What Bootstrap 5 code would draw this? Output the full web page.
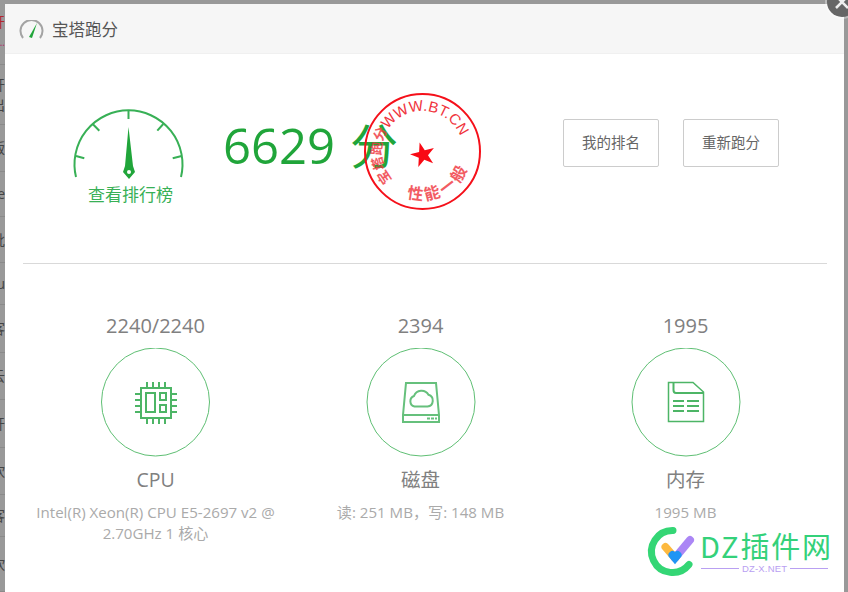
<!DOCTYPE html>
<html lang="zh">
<head>
<meta charset="utf-8">
<title>宝塔跑分</title>
<link href="https://cdn.jsdelivr.net/npm/bootstrap@5.3.0/dist/css/bootstrap.min.css" rel="stylesheet">
<style>
html,body{height:592px;overflow:hidden}
body{background:#999;font-family:"Open Sans","Noto Sans CJK SC",sans-serif;color:#666}
.strip{width:5px;overflow:hidden;flex:none;font-size:14px;color:#444;height:592px}
.strip-row{border-bottom:1px solid #8a8a8a;white-space:nowrap;display:flex;flex-direction:column;align-items:flex-end;justify-content:center;line-height:20px}
.strip-red{color:#b3262e}
.strip-pink{color:#b52a6a;font-size:10px}
.dlg{width:839px;flex:none;height:588px;margin-top:4px;background:#fff;position:relative}
.dlg-head{height:50px;background:#f6f6f6;border-bottom:1px solid #f0f0f0;padding:3px 0 0 14px;font-size:16.500px;color:#555}
.top-zone{height:210px;margin:0 17px 0 18px;border-bottom:1px solid #d9d9d9;padding:54px 48px 0 46px}
.gauge-box{width:120px;color:#38b056;font-size:17px;line-height:20px;white-space:nowrap}
.gauge-box svg{display:block}
.gauge-label{margin-top:5px;margin-left:-3px;margin-right:-6px}
.score{font-size:49px;line-height:60px;color:#20a53a;margin-left:34px;margin-top:7px}
.score i{font-style:normal;margin-left:15px;font-size:48px}
.act{width:96px;height:48px;border:1px solid #ccc;border-radius:2px;background:#fff;color:#666;font-size:14.500px;padding:0}
.act:hover{background:#fff;color:#666;border-color:#ccc}
.acts{margin-left:auto;gap:24px;margin-top:11px}
.cols{margin:0 18px;padding-top:50px;width:795px}
.stat{width:265px;text-align:center;flex:none}
.stat-val{font-size:20px;line-height:24px;color:#808080}
.stat-ico{display:block;margin:10px auto 0;width:110px;height:110px}
.stat-name{font-size:19.500px;line-height:24px;color:#808080;margin-top:10px}
.stat-txt{font-size:15.100px;line-height:21px;color:#aaa;margin:10px auto 0;width:250px}
.closer{position:absolute;top:-17px;right:-13px;width:30px;height:30px;border-radius:50%;background:#666;box-shadow:0 0 0 2px rgba(255,255,255,.35)}
.stamp{position:absolute;left:357px;top:88px;width:120px;height:120px;pointer-events:none}
.wm{position:absolute;left:637px;top:516px;width:190px;height:64px}
</style>
</head>
<body class="d-flex">
<div class="strip">
  <div class="strip-row strip-red" style="height:65px"><span>开</span><span class="strip-pink">...</span></div>
  <div class="strip-row" style="height:60px"><span>开</span><span>出</span></div>
  <div class="strip-row" style="height:47px">版</div>
  <div class="strip-row" style="height:45px">e</div>
  <div class="strip-row" style="height:46px">批</div>
  <div class="strip-row" style="height:42px">u</div>
  <div class="strip-row" style="height:48px">客</div>
  <div class="strip-row" style="height:47px">云</div>
  <div class="strip-row" style="height:48px">开</div>
  <div class="strip-row" style="height:47px">砍</div>
  <div class="strip-row" style="height:42px">客</div>
  <div class="strip-row" style="height:55px">砍</div>
</div>
<div class="dlg">
  <div class="dlg-head d-flex align-items-center gap-2">
    <svg width="25" height="20" viewBox="0 0 25 20"><path d="M4 18A11 11 0 1 1 21 18" fill="none" stroke="#a3a3a3" stroke-width="2"/><path d="M10 17L18 3L13 18Z" fill="#20a53a"/></svg>
    <span>宝塔跑分</span>
  </div>
  <div class="top-zone d-flex align-items-start">
    <div class="gauge-box text-center">
      <svg width="120" height="72" viewBox="69 108 120 72">
        <path d="M76 177A54 54 0 1 1 181 177" fill="none" stroke="#38b056" stroke-width="2"/>
        <path d="M128.500 111V119M92.700 124L99.300 130.700M163.300 124L157.300 130.700M76 156L84.300 158.300M181.700 156L172.700 158.300" stroke="#38b056" stroke-width="2" fill="none"/>
        <path d="M128.500 127L133 166L135 172L129 179L123 172L125 166Z" fill="#20a53a"/>
        <circle cx="129" cy="172" r="2" fill="#fff"/>
      </svg>
      <div class="gauge-label">查看排行榜</div>
    </div>
    <div class="score">6629<i>分</i></div>
    <div class="acts d-flex">
      <button type="button" class="btn act">我的排名</button>
      <button type="button" class="btn act">重新跑分</button>
    </div>
  </div>
  <div class="cols d-flex">
    <div class="stat">
      <div class="stat-val">2240/2240</div>
      <svg class="stat-ico" viewBox="101 348 110 110" fill="none">
        <circle cx="155.500" cy="402" r="54" stroke="#5fbf74" stroke-width="1"/>
        <g stroke="#4db566" stroke-width="2"><rect x="141" y="388" width="30" height="30"/><rect x="146" y="393" width="9" height="19"/><rect x="160" y="393" width="6" height="7"/><rect x="160" y="405" width="6" height="7"/>
        <path d="M147 382V387M153 382V387M159 382V387M165 382V387M147 419V424M153 419V424M159 419V424M165 419V424M135 394H140M135 400H140M135 406H140M135 412H140M172 394H177M172 400H177M172 406H177M172 412H177"/></g>
      </svg>
      <div class="stat-name">CPU</div>
      <div class="stat-txt">Intel(R) Xeon(R) CPU E5-2697 v2 @ 2.70GHz 1 核心</div>
    </div>
    <div class="stat">
      <div class="stat-val">2394</div>
      <svg class="stat-ico" viewBox="366 348 110 110" fill="none">
        <circle cx="421" cy="402" r="54" stroke="#5fbf74" stroke-width="1"/>
        <g stroke="#66c07c" stroke-width="2"><path d="M406 383H436L439 415V422H403V415ZM403 415H439"/>
        <path d="M414.500 406.500H427.500A6 6 0 0 0 428.500 394.800A8 8 0 0 0 414 396A5.500 5.500 0 0 0 414.500 406.500Z"/></g>
        <path d="M427 418.500H430M431 418.500H434M435 418.500H437" stroke="#66c07c" stroke-width="2"/>
      </svg>
      <div class="stat-name">磁盘</div>
      <div class="stat-txt">读: 251 MB，写: 148 MB</div>
    </div>
    <div class="stat">
      <div class="stat-val">1995</div>
      <svg class="stat-ico" viewBox="631 348 110 110" fill="none">
        <circle cx="686" cy="402" r="54" stroke="#5fbf74" stroke-width="1"/>
        <g stroke="#4db566"><path d="M668.500 382.500H693L703.500 392V421.500H668.500Z" stroke-width="1.500"/><path d="M673.500 382V390Q673.500 393 676 393H704" stroke-width="2"/>
        <path d="M673 401H684M687 401H699M673 406H684M687 406H699M673 411H684M687 411H699" stroke-width="2"/></g>
      </svg>
      <div class="stat-name">内存</div>
      <div class="stat-txt">1995 MB</div>
    </div>
  </div>
  <svg class="stamp" viewBox="0 0 120 120" fill="none" overflow="visible">
    <defs><path id="ringTop" d="M29.100 86.350A41 41 0 1 1 99 46"/><path id="ringBot" d="M44.900 105.400A48 48 0 0 0 106.200 74.800"/></defs>
    <circle cx="60.500" cy="59.500" r="57.500" stroke="#f5101a" stroke-width="2"/>
    <path d="M57.600 50.400L62.800 58.300L71.900 55.900L66 63.300L71.100 71.200L62.300 67.800L56.300 75.100L56.800 65.700L48 62.300L57.100 59.900Z" fill="#f90a14"/>
    <text font-size="13.500" font-weight="700" fill="#f0343c" opacity=".8" font-family="'Noto Sans CJK SC',sans-serif"><textPath href="#ringTop" startOffset="-2">宝塔跑分</textPath></text>
    <text font-size="15" fill="#f0343c" font-family="'Liberation Sans',sans-serif"><textPath href="#ringTop" startOffset="52">WWW.BT.CN</textPath></text>
    <text font-size="16" font-weight="700" fill="#f0343c" opacity=".8" font-family="'Noto Sans CJK SC',sans-serif" letter-spacing="3"><textPath href="#ringBot" startOffset="0">性能一般</textPath></text>
  </svg>
  <div class="closer">
    <svg width="30" height="30" viewBox="0 0 30 30"><path d="M9 9L21 21M21 9L9 21" stroke="#eee" stroke-width="2.500"/></svg>
  </div>
  <svg class="wm" viewBox="642 520 190 64" fill="none">
    <path d="M673 530.500A21 21 0 1 0 689 564.500" stroke="#34d675" stroke-width="7" stroke-linecap="round"/>
    <path d="M665.500 547L675 558" stroke="#fdb93f" stroke-width="8" stroke-linecap="round"/>
    <path d="M675 558L690 540" stroke="#ab86f5" stroke-width="8" stroke-linecap="round"/>
    <path d="M672.500 555L675 558L677.500 555" stroke="#1f95f5" stroke-width="8" stroke-linecap="round"/>
    <text x="700" y="558" font-size="29" fill="#34d17a" font-family="'Noto Sans CJK SC',sans-serif" textLength="131">DZ插件网</text>
    <path d="M701 568.500H739M790 568.500H828" stroke="#b9a0f2"/>
    <text x="742" y="572" font-size="9.500" fill="#b9a0f2" font-family="'Liberation Sans',sans-serif" textLength="45">DZ-X.NET</text>
  </svg>
</div>
<script src="https://cdn.jsdelivr.net/npm/bootstrap@5.3.0/dist/js/bootstrap.bundle.min.js"></script>
</body>
</html>
